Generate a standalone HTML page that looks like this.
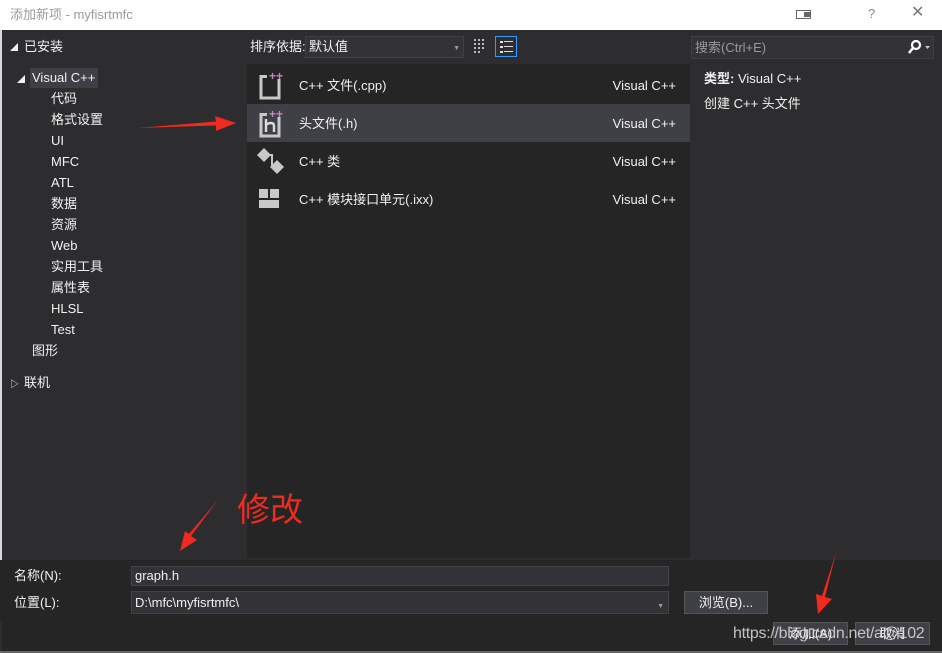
<!DOCTYPE html>
<html><head><meta charset="utf-8"><style>
*{margin:0;padding:0;box-sizing:border-box}
body{width:942px;height:653px;overflow:hidden;background:#2d2d30;font-family:"Liberation Sans","Noto Sans CJK SC",sans-serif;font-size:13px;line-height:16px;color:#f1f1f1;position:relative}
.a{position:absolute;white-space:nowrap}
.title{left:0;top:0;width:942px;height:30px;background:#fff}
.tree div{position:absolute;white-space:nowrap;line-height:16px}
.list{left:247px;top:64px;width:443px;height:494px;background:#252526}
.row{position:absolute;left:0;width:443px;height:38px}
.row .n{position:absolute;left:52px;top:12px;line-height:16px}
.row .v{position:absolute;right:14px;top:12px;line-height:16px}
.row svg{position:absolute;left:8px;top:4px}
.inp{position:absolute;background:#333337;border:1px solid #434346;color:#f1f1f1;padding:1px 3px;font-size:13px;line-height:16px}
.btn{position:absolute;background:#3f3f46;border:1px solid #555;color:#f1f1f1;font-size:13px;text-align:center;line-height:21px}
</style></head><body>
<div class="a title"></div>
<div class="a" style="left:10px;top:7px;color:#999;font-size:13px">添加新项 - myfisrtmfc</div>
<div class="a" style="left:796px;top:10px;width:15px;height:9px;border:1px solid #666"></div>
<div class="a" style="left:804px;top:12px;width:6px;height:5px;background:#666"></div>
<div class="a" style="left:868px;top:6px;color:#888;font-size:13px">?</div>
<div class="a" style="left:911px;top:5px;color:#777;font-size:16px">✕</div>
<div class="a" style="left:0;top:30px;width:2px;height:592px;background:#d8d8d8"></div>

<div class="tree">
<div style="left:10px;top:40px;font-size:8px">◢</div>
<div style="left:24px;top:39px">已安装</div>
<div style="left:30px;top:68px;width:68px;height:20px;background:#3f3f46"></div>
<div style="left:17px;top:72px;font-size:8px">◢</div>
<div style="left:32px;top:70px">Visual C++</div>
<div style="left:51px;top:91px">代码</div>
<div style="left:51px;top:112px">格式设置</div>
<div style="left:51px;top:133px">UI</div>
<div style="left:51px;top:154px">MFC</div>
<div style="left:51px;top:175px">ATL</div>
<div style="left:51px;top:196px">数据</div>
<div style="left:51px;top:217px">资源</div>
<div style="left:51px;top:238px">Web</div>
<div style="left:51px;top:259px">实用工具</div>
<div style="left:51px;top:280px">属性表</div>
<div style="left:51px;top:301px">HLSL</div>
<div style="left:51px;top:322px">Test</div>
<div style="left:32px;top:343px">图形</div>
<div style="left:10px;top:376px;font-size:9px">▷</div>
<div style="left:24px;top:375px">联机</div>
</div>

<div class="a" style="left:250px;top:39px">排序依据:</div>
<div class="inp" style="left:305px;top:36px;width:159px;height:22px;padding-top:2px;border-color:#3f3f46">默认值<span style="position:absolute;right:3px;top:4px;font-size:7px;color:#999">▼</span></div>
<svg class="a" style="left:474px;top:39px" width="14" height="14"><g fill="#bbb"><rect x="0" y="0" width="2" height="2"/><rect x="4" y="0" width="2" height="2"/><rect x="8" y="0" width="2" height="2"/><rect x="0" y="4" width="2" height="2"/><rect x="4" y="4" width="2" height="2"/><rect x="8" y="4" width="2" height="2"/><rect x="0" y="8" width="2" height="2"/><rect x="4" y="8" width="2" height="2"/><rect x="8" y="8" width="2" height="2"/><rect x="0" y="12" width="2" height="2"/><rect x="4" y="12" width="2" height="2"/></g></svg>
<div class="a" style="left:495px;top:36px;width:22px;height:21px;border:1px solid #3399ff"></div>
<svg class="a" style="left:500px;top:41px" width="13" height="12"><g fill="#ddd"><rect x="0" y="0" width="3" height="2"/><rect x="4" y="0" width="9" height="1"/><rect x="0" y="5" width="3" height="2"/><rect x="4" y="5" width="9" height="1"/><rect x="0" y="10" width="3" height="2"/><rect x="4" y="10" width="9" height="1"/></g></svg>
<div class="inp" style="left:691px;top:36px;width:243px;height:23px;padding-top:3px;color:#999;border-color:#3f3f46">搜索(Ctrl+E)</div>
<svg class="a" style="left:908px;top:40px" width="24" height="14"><circle cx="8" cy="5" r="4" fill="none" stroke="#fff" stroke-width="2.2"/><path d="M5 8 L1 13" stroke="#fff" stroke-width="2.5"/><path d="M17 6 L22 6 L19.5 9Z" fill="#ccc"/></svg>

<div class="a list">
<div class="row" style="top:2px">
 <svg width="32" height="30"><path d="M6 5 V28 H24 V9" fill="none" stroke="#c8c8c8" stroke-width="3"/><path d="M6 6.5 H12" stroke="#c8c8c8" stroke-width="3"/><text x="14" y="10" fill="#c586c0" font-size="12" font-weight="bold" font-family="Liberation Sans">++</text></svg>
 <span class="n">C++ 文件(.cpp)</span><span class="v">Visual C++</span></div>
<div class="row" style="top:40px;background:#3f3f46">
 <svg width="32" height="30"><path d="M6 5 V28 H24 V9" fill="none" stroke="#c8c8c8" stroke-width="3"/><path d="M6 6.5 H12" stroke="#c8c8c8" stroke-width="3"/><path d="M11 11 V24 M11 17 Q13 15 16 15 Q19 15 19 18 V24" fill="none" stroke="#ddd" stroke-width="2.4"/><text x="14" y="10" fill="#c586c0" font-size="12" font-weight="bold" font-family="Liberation Sans">++</text></svg>
 <span class="n">头文件(.h)</span><span class="v">Visual C++</span></div>
<div class="row" style="top:78px">
 <svg width="32" height="30"><path d="M9 2 L16 9 L9 16 L2 9Z" fill="#c8c8c8"/><path d="M22 14 L29 21 L22 28 L15 21Z" fill="#c8c8c8"/><path d="M13 9 H17 V21 H19" fill="none" stroke="#c8c8c8" stroke-width="2"/></svg>
 <span class="n">C++ 类</span><span class="v">Visual C++</span></div>
<div class="row" style="top:116px">
 <svg width="32" height="30"><rect x="4" y="5" width="9" height="9" fill="#c8c8c8"/><rect x="15" y="5" width="9" height="9" fill="#c8c8c8"/><rect x="4" y="16" width="20" height="8" fill="#c8c8c8"/></svg>
 <span class="n">C++ 模块接口单元(.ixx)</span><span class="v">Visual C++</span></div>
</div>

<div class="a" style="left:704px;top:71px"><b>类型:</b> Visual C++</div>
<div class="a" style="left:704px;top:96px">创建 C++ 头文件</div>

<div class="a" style="left:0;top:560px;width:942px;height:62px;background:#252526"></div>
<div class="a" style="left:2px;top:622px;width:940px;height:29px;background:#252526"></div>
<div class="a" style="left:0;top:651px;width:942px;height:2px;background:#666"></div>
<div class="a" style="left:14px;top:568px">名称(N):</div>
<div class="inp" style="left:131px;top:566px;width:538px;height:20px">graph.h</div>
<div class="a" style="left:14px;top:595px">位置(L):</div>
<div class="inp" style="left:131px;top:591px;width:538px;height:23px;padding-top:3px">D:\mfc\myfisrtmfc\<span style="position:absolute;right:4px;top:7px;font-size:7px;color:#999">▼</span></div>
<div class="btn" style="left:684px;top:591px;width:84px;height:23px">浏览(B)...</div>
<div class="btn" style="left:773px;top:622px;width:75px;height:23px">添加(A)</div>
<div class="btn" style="left:855px;top:622px;width:75px;height:23px">取消</div>
<div class="a" style="left:733px;top:624px;color:#ddd;font-size:16px;line-height:20px;letter-spacing:-0.3px;opacity:.85">https://blog.csdn.net/a@102</div>

<svg class="a" style="left:0;top:0" width="942" height="653">
<path d="M138 128 L216 121.5 L215 116 L236 123 L216 131 L216 125.5 Z" fill="#f02a1e"/>
<path d="M218 500 L191 536 L197 540 L180 551 L185 531 L189 534 Z" fill="#f02a1e"/>
<path d="M836 553 L825 597 L832 599 L818 614 L816 594 L822 596 Z" fill="#f02a1e"/>
<text x="237" y="521" fill="#f02a1e" font-size="33" font-family="Noto Sans CJK SC,sans-serif">修改</text>
</svg>
</body></html>
